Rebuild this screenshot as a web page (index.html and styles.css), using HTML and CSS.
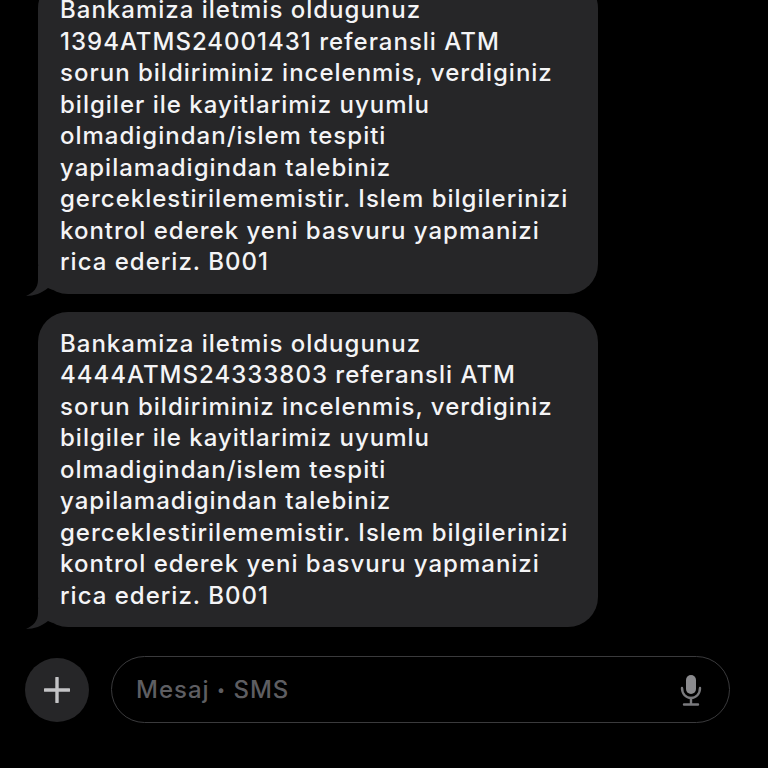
FILE: index.html
```html
<!DOCTYPE html>
<html>
<head>
<meta charset="utf-8">
<link rel="stylesheet" href="styles.css">
</head>
<body>
<div class="screen">
  <div class="thread">
    <div class="bubble">
      <p class="text"><span>Bankamiza iletmis oldugunuz</span><span>1394ATMS24001431 referansli ATM</span><span>sorun bildiriminiz incelenmis, verdiginiz</span><span>bilgiler ile kayitlarimiz uyumlu</span><span>olmadigindan/islem tespiti</span><span>yapilamadigindan talebiniz</span><span>gerceklestirilememistir. Islem bilgilerinizi</span><span>kontrol ederek yeni basvuru yapmanizi</span><span>rica ederiz. B001</span></p>
      <svg class="tail" width="30" height="30" viewBox="0 0 30 30"><path d="M12 0 H30 V24 C27 24 24 23 22 22 C16 27 8 30 0 30 C7 27 12 22 12 14 Z" fill="#262628"/></svg>
    </div>
    <div class="bubble">
      <p class="text"><span>Bankamiza iletmis oldugunuz</span><span>4444ATMS24333803 referansli ATM</span><span>sorun bildiriminiz incelenmis, verdiginiz</span><span>bilgiler ile kayitlarimiz uyumlu</span><span>olmadigindan/islem tespiti</span><span>yapilamadigindan talebiniz</span><span>gerceklestirilememistir. Islem bilgilerinizi</span><span>kontrol ederek yeni basvuru yapmanizi</span><span>rica ederiz. B001</span></p>
      <svg class="tail" width="30" height="30" viewBox="0 0 30 30"><path d="M12 0 H30 V24 C27 24 24 23 22 22 C16 27 8 30 0 30 C7 27 12 22 12 14 Z" fill="#262628"/></svg>
    </div>
  </div>
  <div class="composer">
    <div class="plus">
      <svg width="26" height="26" viewBox="0 0 26 26"><path d="M13 1 V25 M1 13 H25" stroke="#c4c4c6" stroke-width="3.4" stroke-linecap="round"/></svg>
    </div>
    <div class="field">
      <span class="placeholder">Mesaj <span class="dot">•</span> SMS</span>
      <svg class="mic" width="22" height="32" viewBox="0 0 22 32"><rect x="6" y="1" width="10" height="19" rx="5" fill="#8a8a8d"/><path d="M2 14 C2 20 6 24 11 24 C16 24 20 20 20 14" fill="none" stroke="#7a7a7d" stroke-width="2.4" stroke-linecap="round"/><path d="M11 24 V30 M4 30.5 H18" stroke="#7a7a7d" stroke-width="2.4" stroke-linecap="round"/></svg>
    </div>
  </div>
</div>
</body>
</html>
```
FILE: styles.css
```css
html, body {
  margin: 0;
  padding: 0;
  background: #000;
}
.screen {
  width: 768px;
  height: 768px;
  overflow: hidden;
  display: flex;
  flex-direction: column;
  font-family: Inter, "Noto Sans", sans-serif;
}
.thread {
  display: flex;
  flex-direction: column;
  gap: 18px;
  margin-top: -22px;
  padding-left: 38px;
}
.bubble {
  position: relative;
  width: 560px;
  box-sizing: border-box;
  background: #262628;
  border-radius: 30px;
  padding: 16px 20px 16px 22px;
}
.text {
  margin: 0;
  color: #f4f4f6;
  font-size: 24px;
  font-weight: 500;
  line-height: 31.5px;
  letter-spacing: 1px;
}
.text span {
  display: block;
  white-space: nowrap;
}
.tail {
  position: absolute;
  left: -12px;
  bottom: -2px;
}
.composer {
  margin-top: 29px;
  display: flex;
  align-items: center;
  padding-left: 25px;
  gap: 22px;
}
.plus {
  width: 64px;
  height: 64px;
  border-radius: 50%;
  background: #262628;
  display: flex;
  align-items: center;
  justify-content: center;
}
.field {
  width: 619px;
  height: 67px;
  box-sizing: border-box;
  border: 1.5px solid #3a3a3c;
  border-radius: 34px;
  display: flex;
  align-items: center;
  justify-content: space-between;
  padding: 0 27px 0 24px;
}
.placeholder {
  color: #5e5e62;
  font-size: 24px;
  font-weight: 500;
  letter-spacing: 1px;
}
.dot {
  font-size: 15px;
  vertical-align: 3px;
}
.mic {
  display: block;
}
```
